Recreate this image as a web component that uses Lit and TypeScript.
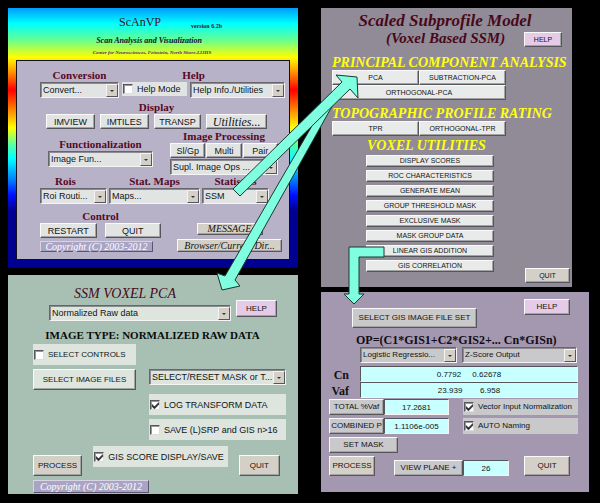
import { LitElement, html, css, svg } from "lit";
import { customElement } from "lit/decorators.js";

const combo = (label: string, value: string, cls = "") => html`
  <span class="combo ${cls}">
    <select aria-label=${label}><option>${value}</option></select>
    <span class="drop" aria-hidden="true"></span>
  </span>`;

const tick = (label: string, checked: boolean, cls = "") => html`
  <label class="tick ${cls}"><input type="checkbox" .checked=${checked} /><span>${label}</span></label>`;

const utilities = [
  "DISPLAY SCORES",
  "ROC CHARACTERISTICS",
  "GENERATE MEAN",
  "GROUP THRESHOLD MASK",
  "EXCLUSIVE MASK",
  "MASK GROUP DATA",
  "LINEAR GIS ADDITION",
  "GIS CORRELATION",
];

const controls = css`
  :host { display: block; font: 8px/10px "Liberation Sans", Arial, sans-serif; color: #101414; }
  * { box-sizing: border-box; }
  h1, h2, h3, p { margin: 0; font-family: "Liberation Serif", "Times New Roman", serif; white-space: nowrap; text-align: center; }
  button {
    display: flex; align-items: center; justify-content: center;
    min-width: 0; margin: 0; padding: 0; font: inherit; color: inherit; white-space: nowrap;
    background: var(--face); border: 1px solid; border-color: #fafafa #55555c #55555c #fafafa;
    box-shadow: inset -1px -1px #a3a3a3;
  }
  .warm { background: #d4d0c8; }
  .pink { background: #e6cbe8; }
  .combo {
    display: grid; min-width: 0; height: 16px; background: var(--face);
    border: 1px solid; border-color: #66666c #f4f4f4 #f4f4f4 #66666c;
    box-shadow: inset 1px 1px #8c8c90;
  }
  .combo > * { grid-area: 1 / 1; }
  select {
    appearance: none; min-width: 0; width: 100%; margin: 0; padding: 0 0 0 2px;
    font: inherit; color: inherit; background: none; border: 0; border-radius: 0;
  }
  .drop {
    display: grid; place-items: center; justify-self: end; width: 12px; margin: 1px 0 0; pointer-events: none;
    background: #d4d0c8; border: 1px solid; border-color: #f4f4f4 #55555c #55555c #f4f4f4;
  }
  .drop::after { content: ""; border: 2px solid transparent; border-top-color: #333; border-bottom: 0; }
  .tick { display: flex; align-items: center; gap: 4px; min-width: 0; background: var(--face); white-space: nowrap; }
  input[type="checkbox"] {
    appearance: none; display: grid; place-items: center; flex: none; width: 10px; height: 10px; margin: 0 0 0 1px;
    background: #fff; border: 1px solid; border-color: #55555c #ddd #ddd #55555c; box-shadow: inset 1px 1px #99999c;
  }
  input[type="checkbox"]:checked::after {
    content: ""; width: 6px; height: 3px; border: solid #111; border-width: 0 0 1px 1px;
    box-shadow: -1px 1px #444; transform: translateY(-1px) rotate(-45deg);
  }
  .copyright {
    color: #fff; background: #aaa4c4; text-align: center; font-style: italic; white-space: nowrap;
    border: 1px solid; border-color: #d8d4e4 #5a5670 #5a5670 #d8d4e4;
  }
`;

@customElement("scan-window")
export class ScanWindow extends LitElement {
  static styles = [controls, css`
    :host {
      --face: #e2e4e4; font-size: 9px; padding: 0 8px 8px;
      background: linear-gradient(#009cff 0%, #00ffff 6%, #60ff98 12%, #ffff00 19%, #ff8c00 25%, #ff0000 31.5%,
        #ff7000 38%, #ffff00 46%, #50ffb0 53%, #00ffff 58%, #0080ff 66%, #0010ff 72%, #000090 78%, #000090 100%);
    }
    header { height: 52px; padding-top: 5px; color: #3c1020; }
    .brand { display: grid; grid-template-columns: 1fr auto 1fr; align-items: end; column-gap: 30px; height: 17px; padding-right: 26px; }
    h1 { grid-column: 2; font-size: 12px; line-height: 16px; font-weight: 400; }
    .version { font-size: 6px; line-height: 8px; font-weight: 700; justify-self: start; }
    .tagline { padding: 6px 8px 0 0; font-size: 8px; line-height: 10px; font-weight: 700; font-style: italic; color: #101030; }
    .center { padding: 3px 2px 0 0; font-size: 5px; line-height: 8px; font-weight: 700; font-style: italic; color: #602080; }
    .inner { background: #b8b2c8; border: 1px solid #101018; padding: 8px 0 7px; }
    h2 { font-size: 11px; line-height: 13px; color: #560824; }
    button { height: 15px; }
    .convert { display: grid; grid-template-columns: 79fr 65fr 95fr; column-gap: 3px; padding: 0 4px 0 23px; }
    .help { grid-column: span 2; padding-right: 20px; }
    .convert .tick { height: 14px; }
    .display { padding: 3px 22px 0 29px; }
    .views { display: grid; grid-template-columns: 49fr 49fr 48fr 61fr; column-gap: 5px; }
    .script { font: italic 12px/12px "Liberation Serif", serif; }
    .process { display: grid; grid-template-columns: 105fr 108fr; column-gap: 17px; padding: 1px 11px 0 31px; }
    .functional { padding-top: 8px; }
    .modes { display: grid; grid-template-columns: repeat(3, 1fr); column-gap: 1px; margin-bottom: 1px; }
    .maps { display: grid; grid-template-columns: 67fr 91fr 67fr; column-gap: 2px; padding: 0 20px 0 23px; }
    .rois { padding-right: 16px; }
    .control { display: grid; grid-template-columns: 121fr 105fr; column-gap: 16px; align-items: end; padding: 6px 7px 0 23px; }
    .pair { display: grid; grid-template-columns: 1fr 1fr; column-gap: 8px; }
    .copyright { margin: 3px 8px 0 0; font-size: 10px; line-height: 9px; }
    .messages { display: grid; row-gap: 4px; }
    .messages button { height: 13px; font: italic 10px/10px "Liberation Serif", serif; }
    .messages .short { width: 66px; height: 12px; justify-self: center; }
  `];

  render() {
    return html`
      <header>
        <div class="brand"><h1>ScAnVP</h1><p class="version">version 6.2b</p></div>
        <p class="tagline">Scan Analysis and Visualization</p>
        <p class="center">Center for Neurosciences, Feinstein, North Shore-LIJHS</p>
      </header>
      <div class="inner">
        <section class="convert">
          <h2>Conversion</h2><h2 class="help">Help</h2>
          ${combo("Conversion", "Convert...")}
          ${tick("Help Mode", false)}
          ${combo("Help", "Help Info./Utilities")}
        </section>
        <section class="display">
          <h2>Display</h2>
          <div class="views">
            <button>IMVIEW</button><button>IMTILES</button><button>TRANSP</button>
            <button class="script">Utilities...</button>
          </div>
        </section>
        <section class="process">
          <div class="functional"><h2>Functionalization</h2>${combo("Functionalization", "Image Fun...")}</div>
          <div>
            <h2>Image Processing</h2>
            <div class="modes"><button>Sl/Gp</button><button>Multi</button><button>Pair</button></div>
            ${combo("Image Processing", "Supl. Image Ops ...")}
          </div>
        </section>
        <section class="maps">
          <h2 class="rois">Rois</h2><h2>Stat. Maps</h2><h2>Statistics</h2>
          ${combo("Rois", "Roi Routi...")} ${combo("Stat. Maps", "Maps...")} ${combo("Statistics", "SSM")}
        </section>
        <section class="control">
          <div>
            <h2>Control</h2>
            <div class="pair"><button>RESTART</button><button>QUIT</button></div>
            <p class="copyright">Copyright (C) 2003-2012</p>
          </div>
          <div class="messages">
            <button class="warm short">MESSAGE</button>
            <button class="warm">Browser/Current Dir...</button>
          </div>
        </section>
      </div>`;
  }
}

@customElement("model-window")
export class ModelWindow extends LitElement {
  static styles = [controls, css`
    :host { --face: #e9ebea; font-size: 7px; background: #918b98; padding: 3px 2px 4px 11px; }
    h1 { font-size: 17px; line-height: 20px; font-style: italic; color: #480818; padding-right: 12px; }
    .sub { display: grid; grid-template-columns: 181fr 38fr; column-gap: 11px; padding-right: 8px; }
    .sub h2 { font-size: 15px; line-height: 15px; font-style: italic; color: #480818; padding-left: 54px; text-align: left; }
    .sub button { height: 15px; margin-top: 1px; }
    .yellow { font-size: 14px; line-height: 15px; font-style: italic; color: #ffff10; text-align: left; }
    .first { margin-top: 8px; }
    .block { margin-right: 64px; }
    .two { display: grid; grid-template-columns: 1fr 1fr; }
    .block button { height: 15px; }
    .wide { width: 100%; }
    .second { margin-top: 6px; }
    .third { padding-left: 35px; margin-top: 2px; }
    .bottom { display: grid; grid-template-columns: 128fr 45fr; column-gap: 31px; padding-left: 34px; margin-top: 2px; }
    .list { display: grid; row-gap: 3px; padding-bottom: 11px; }
    .list button { height: 12px; }
    .quit { align-self: end; height: 15px; }
  `];

  render() {
    return html`
      <h1>Scaled Subprofile Model</h1>
      <div class="sub"><h2>(Voxel Based SSM)</h2><button class="pink">HELP</button></div>
      <h3 class="yellow first">PRINCIPAL COMPONENT ANALYSIS</h3>
      <div class="block">
        <div class="two"><button>PCA</button><button>SUBTRACTION-PCA</button></div>
        <button class="wide">ORTHOGONAL-PCA</button>
      </div>
      <h3 class="yellow second">TOPOGRAPHIC PROFILE RATING</h3>
      <div class="block two"><button>TPR</button><button>ORTHOGONAL-TPR</button></div>
      <h3 class="yellow third">VOXEL UTILITIES</h3>
      <div class="bottom">
        <div class="list">${utilities.map((name) => html`<button>${name}</button>`)}</div>
        <button class="warm quit">QUIT</button>
      </div>`;
  }
}

@customElement("pca-window")
export class PcaWindow extends LitElement {
  static styles = [controls, css`
    :host { --face: #dde5de; font-size: 9px; background: #a8c0b4; padding: 11px 12px 1px 25px; }
    .title { display: grid; grid-template-columns: 182fr 41fr; column-gap: 5px; padding: 0 9px 0 16px; }
    h1 { font-size: 14px; line-height: 16px; font-weight: 400; font-style: italic; color: #480818; padding-right: 30px; }
    .title .combo { margin-top: 3px; }
    .title button { grid-area: 1 / 2 / 3 / 3; height: 17px; align-self: end; margin-bottom: 4px; font-size: 8px; }
    h2 { font-size: 11px; line-height: 14px; padding: 7px 14px 0 0; color: #080c0c; }
    .grid { display: grid; grid-template-columns: 103fr 137fr; column-gap: 13px; row-gap: 4px; margin-top: 2px; }
    .grid .tick, .grid button { height: 21px; }
    .left { grid-column: 1; font-size: 8px; }
    .right { grid-column: 2; }
    .foot { display: grid; grid-template-columns: 50fr 137fr 42fr; column-gap: 11px; padding: 6px 6px 0 0; }
    .foot .tick { height: 21px; }
    .foot button { height: 21px; margin-top: 9px; font-size: 8px; }
    .copyright { width: 116px; margin-top: 4px; font-size: 10px; line-height: 11px; }
  `];

  render() {
    return html`
      <div class="title">
        <h1>SSM VOXEL PCA</h1>
        ${combo("Image type", "Normalized Raw data")}
        <button class="pink">HELP</button>
      </div>
      <h2>IMAGE TYPE: NORMALIZED RAW DATA</h2>
      <div class="grid">
        ${tick("SELECT CONTROLS", false, "left")}
        <button class="left">SELECT IMAGE FILES</button>
        ${combo("Mask", "SELECT/RESET MASK or T...")}
        ${tick("LOG TRANSFORM DATA", true, "right")}
        ${tick("SAVE (L)SRP and GIS n>16", false, "right")}
      </div>
      <div class="foot">
        <button class="warm">PROCESS</button>
        ${tick("GIS SCORE DISPLAY/SAVE", true)}
        <button class="warm">QUIT</button>
      </div>
      <p class="copyright">Copyright (C) 2003-2012</p>`;
  }
}

@customElement("gis-window")
export class GisWindow extends LitElement {
  static styles = [controls, css`
    :host { --face: #c9c8ca; background: #a498b0; padding: 7px 11px 16px 8px; }
    .top { display: grid; grid-template-columns: 125fr 46fr; column-gap: 47px; padding: 0 8px 0 23px; }
    .top button { height: 16px; }
    .top .files { height: 20px; margin-top: 9px; }
    h1 { font-size: 12px; line-height: 14px; padding: 5px 0 0 27px; text-align: left; color: #100c14; }
    .modes { display: grid; grid-template-columns: 97fr 115fr; column-gap: 5px; padding: 0 1px 0 31px; }
    .fields { display: grid; grid-template-columns: 20fr 218fr; column-gap: 11px; margin-top: 3px; }
    .fields label { font: 700 12px/14px "Liberation Serif", serif; text-align: right; align-self: end; }
    input:not([type="checkbox"]) {
      width: 100%; min-width: 0; height: 16px; margin: 0; padding: 0; font: inherit; color: inherit; text-align: center;
      background: #c8ffff; border: 1px solid; border-color: #55555c #f4f4f4 #f4f4f4 #55555c; border-radius: 0;
    }
    .results { display: grid; grid-template-columns: 55fr 65fr 129fr; row-gap: 3px; margin-top: 1px; }
    .results button, .results .tick { height: 16px; }
    .results .tick { margin-left: 14px; }
    .mask { width: 69px; height: 16px; margin-top: 3px; }
    .foot { display: grid; grid-template-columns: 46fr 19fr 69fr 46fr 15fr 46fr; align-items: end; margin-top: 3px; padding-right: 8px; }
    .foot .end { grid-column: 6; }
    .foot button { height: 20px; }
    .foot .plane { grid-column: 3; height: 16px; }
  `];

  render() {
    return html`
      <div class="top">
        <button class="files">SELECT GIS IMAGE FILE SET</button>
        <button class="pink">HELP</button>
      </div>
      <h1>OP=(C1*GIS1+C2*GIS2+... Cn*GISn)</h1>
      <div class="modes">
        ${combo("Method", "Logistic Regressio...")} ${combo("Output", "Z-Score Output")}
      </div>
      <div class="fields">
        <label for="cn">Cn</label><input id="cn" value="0.7792     0.62678" />
        <label for="vaf">Vaf</label><input id="vaf" value="23.939        6.958" />
      </div>
      <div class="results">
        <button>TOTAL %Vaf</button><input aria-label="TOTAL %Vaf" value="17.2681" />
        ${tick("Vector Input Normalization", true)}
        <button>COMBINED P</button><input aria-label="COMBINED P" value="1.1106e-005" />
        ${tick("AUTO Naming", true)}
      </div>
      <button class="mask">SET MASK</button>
      <div class="foot">
        <button class="warm">PROCESS</button>
        <button class="plane">VIEW PLANE +</button><input aria-label="View plane" value="26" />
        <button class="warm end">QUIT</button>
      </div>`;
  }
}

@customElement("app-root")
export class AppRoot extends LitElement {
  static styles = css`
    :host { display: block; position: relative; min-height: 100vh; box-sizing: border-box; padding: 8px 11px 9px 8px; background: #000; }
    .desk { display: grid; grid-template-columns: 290fr 268fr; column-gap: 23px; align-items: start; }
    .left, .right { display: grid; min-width: 0; }
    .left { row-gap: 7px; }
    .right { row-gap: 5px; }
    model-window { margin-right: 17px; }
    .arrows { position: absolute; top: 0; left: 0; width: 100%; pointer-events: none; }
  `;

  render() {
    return html`
      <main class="desk">
        <div class="left"><scan-window></scan-window><pca-window></pca-window></div>
        <div class="right"><model-window></model-window><gis-window></gis-window></div>
      </main>
      <svg class="arrows" viewBox="0 0 600 503" aria-hidden="true">
        ${["331,93 340,92 235,280 240,286 222,290 217,273 225,276",
          "233,189 342,82 336,75 357,77 358,98 350,89 240,196",
          "349,247 384,247 384,257 359,257 359,294 364,294 354,304 344,294 349,294"].map(
            (points) => svg`<polygon points=${points} fill="#80ffe0" stroke="#183830" stroke-width="1" />`)}
      </svg>`;
  }
}
